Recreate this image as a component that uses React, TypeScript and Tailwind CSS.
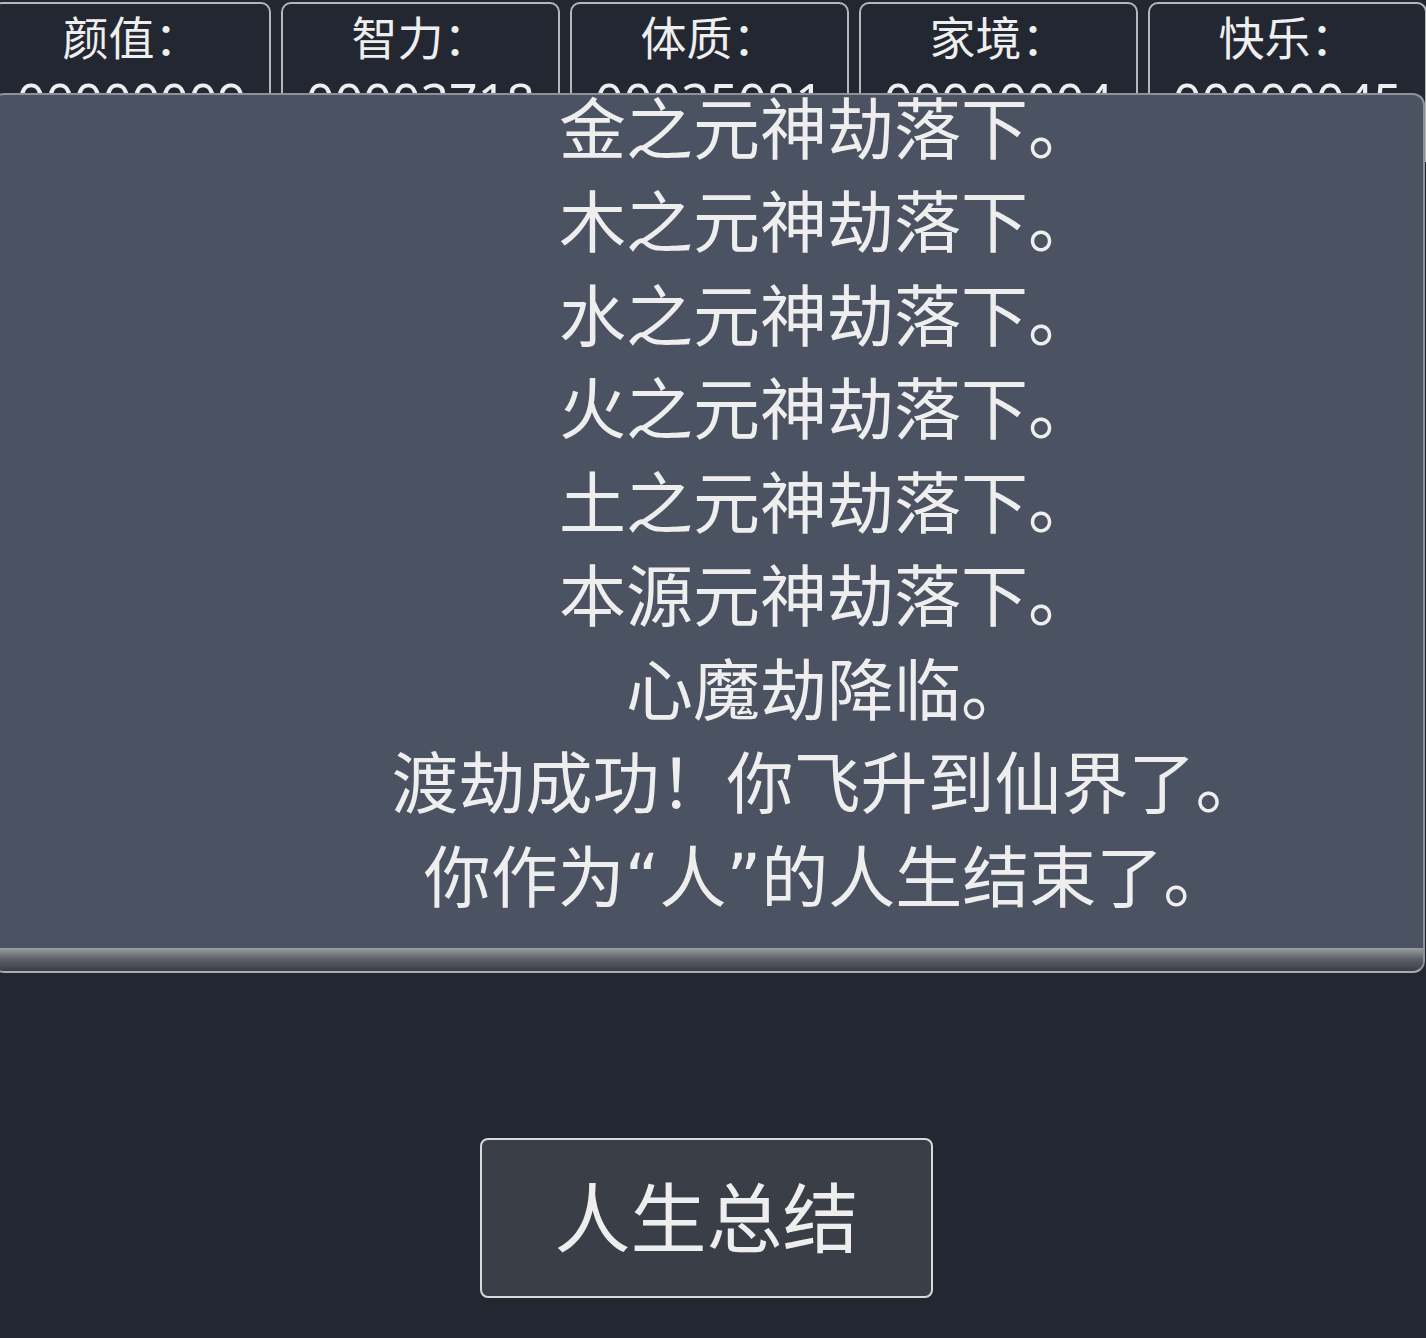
import { FC } from "react";

const stats = [
  { label: "颜值：", value: "00000009" },
  { label: "智力：", value: "00002718" },
  { label: "体质：", value: "00025081" },
  { label: "家境：", value: "00000004" },
  { label: "快乐：", value: "00000045" },
];

const lines = [
  "雷劫降临。",
  "金之元神劫落下。",
  "木之元神劫落下。",
  "水之元神劫落下。",
  "火之元神劫落下。",
  "土之元神劫落下。",
  "本源元神劫落下。",
  "心魔劫降临。",
  "渡劫成功！你飞升到仙界了。",
  "你作为“人”的人生结束了。",
];

const App: FC = () => {
  return (
    <div className="min-h-[1338px] w-full overflow-hidden bg-[#232731] font-['Noto_Sans','Noto_Sans_CJK_SC',sans-serif] text-[#eeeeee]">
      <div className="ml-[-8px] w-[1433px]">
        {/* stat boxes */}
        <div className="mt-[2px] flex gap-[10px]">
          {stats.map((s) => (
            <div
              key={s.label}
              className="h-[160px] w-[279px] shrink-0 rounded-t-[10px] border-2 border-[#b4b7bc] text-center"
            >
              <div className="text-[46px] leading-[66px]">{s.label}</div>
              <div className="text-[50px] leading-[60px]">{s.value}</div>
            </div>
          ))}
        </div>

        {/* event log */}
        <div className="relative z-10 mt-[-69px] flex h-[880px] flex-col overflow-hidden rounded-[12px] border-2 border-[#8e9197] border-b-[#a9abae] bg-[#4b5261]">
          <div className="flex flex-1 flex-col items-center justify-end overflow-hidden pb-[22px] pl-[237px] font-['DejaVu_Sans','Noto_Sans_CJK_SC',sans-serif] text-[67px] leading-[93.5px]">
            {lines.map((l) => (
              <div key={l} className="whitespace-nowrap">
                {l}
              </div>
            ))}
          </div>
          <div className="h-[23px] bg-gradient-to-b from-[#9c9ea3] via-[#5b5e65] to-[#3b3e46]"></div>
        </div>

        {/* summary button */}
        <div className="mt-[165px] flex justify-center pr-[4px]">
          <button className="h-[160px] w-[453px] rounded-[8px] border-2 border-[#d9d9d9] bg-[#3a3e47] text-[76px] text-[#eeeeee]">
            人生总结
          </button>
        </div>
      </div>
    </div>
  );
};

export default App;
